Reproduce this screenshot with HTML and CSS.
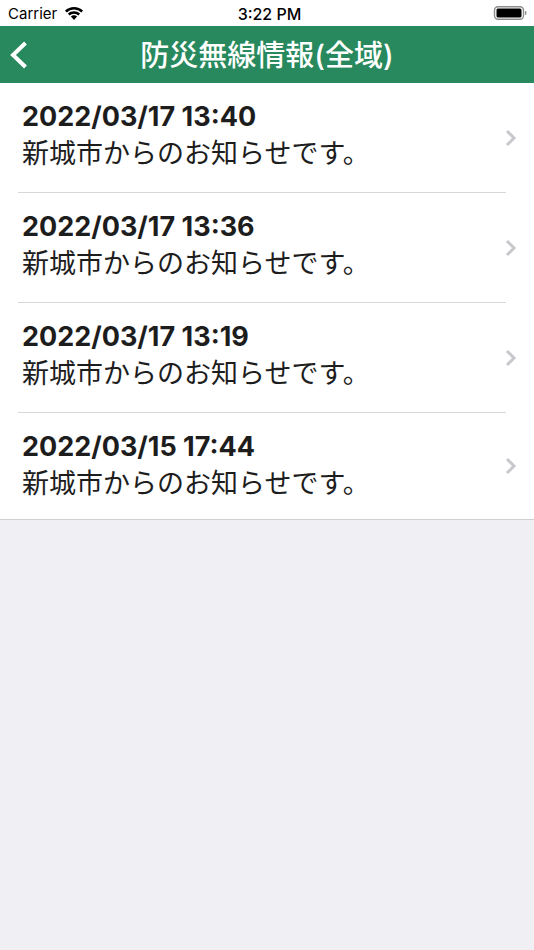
FILE: index.html
```html
<!DOCTYPE html>
<html lang="ja">
<head>
<meta charset="utf-8">
<meta name="viewport" content="width=device-width, initial-scale=1">
<title>防災無線情報(全域)</title>
<link rel="stylesheet" href="styles.css">
</head>
<body>
<div class="status">
  <div class="carrier"><span>Carrier</span>
    <svg class="wifi" viewBox="0 0 18 13" aria-hidden="true"><path d="M9 0C5.600 0 2.400 1.300 0 3.600L1.700 5.400A10.500 10.500 0 0 1 16.300 5.400L18 3.600A13 13 0 0 0 9 0ZM9 4.200C6.700 4.200 4.600 5 2.900 6.600L4.600 8.400A6.400 6.400 0 0 1 13.400 8.400L15.100 6.600A8.800 8.800 0 0 0 9 4.200ZM9 8.300C7.800 8.300 6.700 8.800 5.900 9.600L9 13L12.100 9.600A4.500 4.500 0 0 0 9 8.300Z"/></svg>
  </div>
  <time class="clock">3:22 PM</time>
  <svg class="battery" viewBox="0 0 34 14" aria-hidden="true"><rect class="shell" x="1.500" y="0.700" width="29" height="12.600" rx="3.500"/><rect x="3.500" y="2.500" width="25" height="9" rx="1.500"/><path class="cap" d="M32 4.800Q33.600 5.400 33.600 7T32 9.200Z"/></svg>
</div>
<header class="nav">
  <button class="back" type="button" aria-label="戻る"><svg viewBox="0 0 18 28" aria-hidden="true"><path d="M15.500 2L3 14L15.500 26"/></svg></button>
  <h1>防災無線情報(全域)</h1>
</header>
<main>
  <ul class="list">
    <li><a href="#1"><span class="copy"><time>2022/03/17 13:40</time><span>新城市からのお知らせです。</span></span><svg class="chevron" viewBox="0 0 12 18" aria-hidden="true"><path d="M2 2L9 9L2 16"/></svg></a></li>
    <li><a href="#2"><span class="copy"><time>2022/03/17 13:36</time><span>新城市からのお知らせです。</span></span><svg class="chevron" viewBox="0 0 12 18" aria-hidden="true"><path d="M2 2L9 9L2 16"/></svg></a></li>
    <li><a href="#3"><span class="copy"><time>2022/03/17 13:19</time><span>新城市からのお知らせです。</span></span><svg class="chevron" viewBox="0 0 12 18" aria-hidden="true"><path d="M2 2L9 9L2 16"/></svg></a></li>
    <li><a href="#4"><span class="copy"><time>2022/03/15 17:44</time><span>新城市からのお知らせです。</span></span><svg class="chevron" viewBox="0 0 12 18" aria-hidden="true"><path d="M2 2L9 9L2 16"/></svg></a></li>
  </ul>
</main>
</body>
</html>
```
FILE: styles.css
```css
* { box-sizing: border-box; }
body { margin: 0; min-height: 100vh; background: #efeff4; color: #1d1d1d; font-family: Inter, "Noto Sans CJK JP", sans-serif; }
.status { display: grid; grid-template-columns: 1fr auto 1fr; align-items: center; height: 26px; padding: 0 7px 0 8px; background: #fff; color: #000; font-size: 15px; line-height: 24px; }
.carrier, .clock { padding-top: 2px; }
.carrier { display: flex; align-items: center; gap: 8px; }
.wifi { width: 18px; height: 13px; margin-bottom: 2px; }
.clock { font-size: 16px; font-weight: 500; padding-left: 4px; }
.battery { justify-self: end; width: 34px; height: 14px; }
.shell { fill: none; stroke: #8c8c8c; stroke-width: 1.4; }
.cap { fill: #8c8c8c; }
.nav { display: grid; grid-template-columns: 40px 1fr 40px; align-items: center; height: 57px; background: #27895d; color: #fff; }
.back { display: flex; padding: 0 0 0 10px; border: 0; background: none; }
.back svg { width: 18px; height: 28px; fill: none; stroke: #fff; stroke-width: 4; }
h1 { margin: 0; padding-top: 2px; text-align: center; font-size: 29px; line-height: 56px; font-weight: 500; white-space: nowrap; }
.list { margin: 0; padding: 0; list-style: none; background: #fff; border-bottom: 1px solid #d0d0d3; }
.list li { padding-right: 17px; padding-left: 18px; }
.list a { display: grid; grid-template-columns: 1fr 12px; align-items: center; color: inherit; text-decoration: none; }
.copy { display: flex; flex-direction: column; margin-right: -1px; padding: 15px 4px 20px; font-size: 27px; line-height: 37px; }
.list li:not(:last-child) .copy { border-bottom: 1px solid #d8d8da; }
.list li:last-child .copy { padding-bottom: 17px; }
.copy time { font-weight: 700; }
.chevron { width: 12px; height: 18px; fill: none; stroke: #c7c7cc; stroke-width: 3; }
```
